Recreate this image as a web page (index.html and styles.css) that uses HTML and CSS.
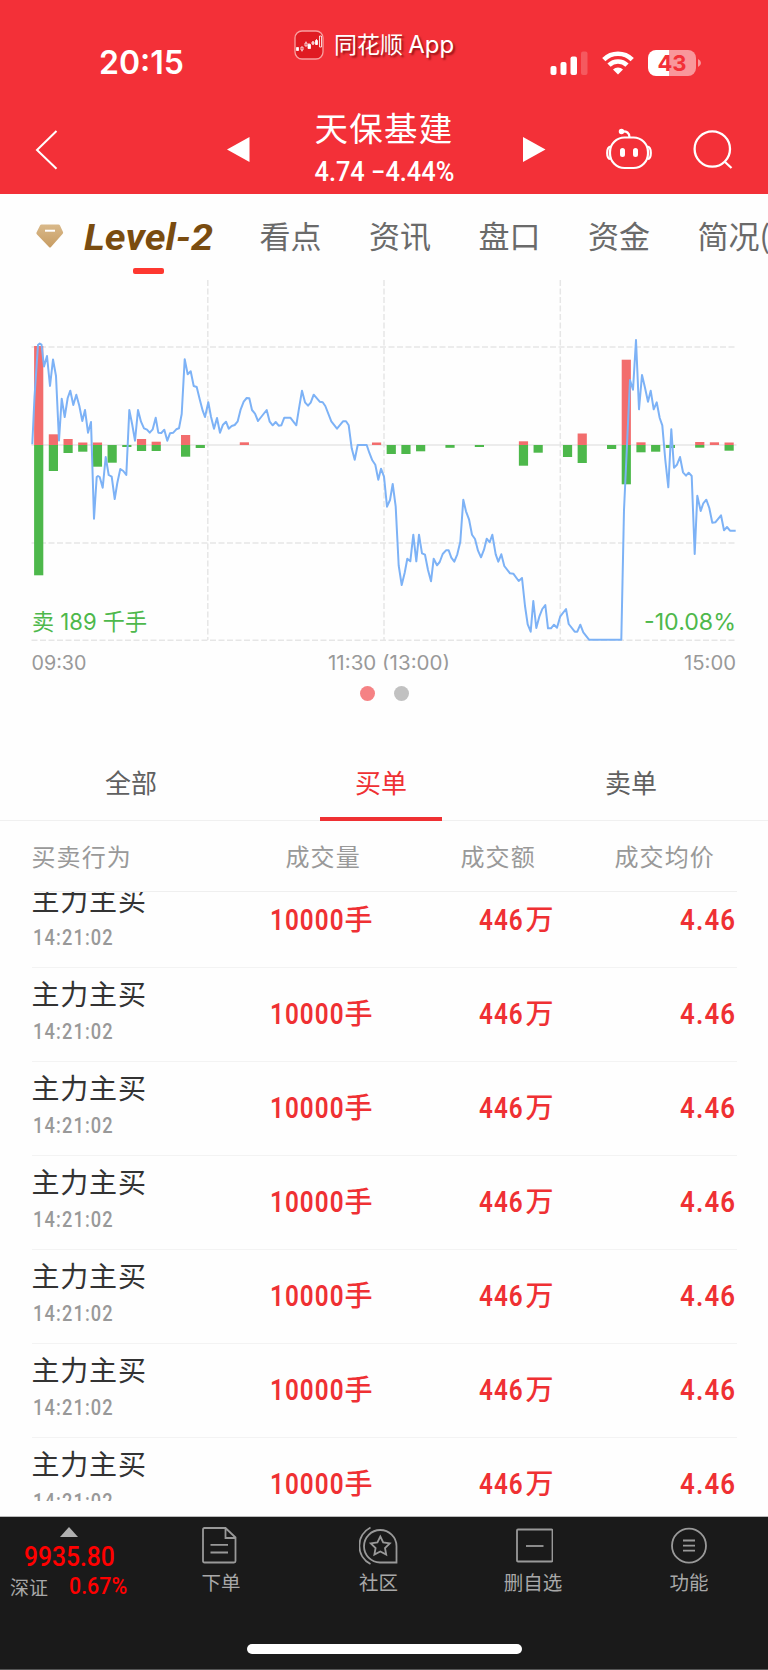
FILE: index.html
```html
<!DOCTYPE html>
<html lang="zh-CN">

<head>
    <meta charset="UTF-8">
    <meta name="viewport" content="width=device-width, initial-scale=1.0">
    <title>天保基建 - Level-2</title>
    <link rel="stylesheet" href="styles.css">
</head>

<body>
    <header class="header">
        <div class="status-bar">
            <span class="clock">20:15</span>
            <svg class="signal" width="38" height="24" viewBox="0 0 38 24" fill="#fff">
                <rect x="0.5" y="15" width="6" height="9" rx="2" />
                <rect x="10.5" y="11" width="6" height="13" rx="2" />
                <rect x="20.5" y="5.500" width="6.500" height="18.500" rx="2" />
                <rect x="31" y="0.500" width="6.500" height="23.500" rx="2" opacity="0.2" />
            </svg>
            <svg class="wifi" width="32" height="24" viewBox="0 0 32 24" fill="none" stroke="#fff" stroke-width="4.600">
                <path d="M1.800 8.600a20.200 20.200 0 0 1 28.400 0" />
                <path d="M7 14.200a12.800 12.800 0 0 1 18 0" />
                <path d="M16 23.500l-5-5a7 7 0 0 1 10 0z" fill="#fff" stroke="none" />
            </svg>
            <div class="battery"><span>43</span></div>
            <svg class="battery-cap" width="3" height="8" viewBox="0 0 3 8"><path d="M0 0q3 1.500 3 4t-3 4z" fill="#f9979b" /></svg>
        </div>
        <div class="brand">
            <svg width="30" height="30" viewBox="0 0 30 30">
                <rect x="1" y="1" width="28" height="28" rx="7" fill="#e01b22" stroke="#f8a0a0" stroke-width="1.300" />
                <g fill="#fff" stroke="#fff" stroke-width="0.800">
                    <path d="M2.500 17.500h2v3h-2zM14 14.500h2.500v4H14zM21.500 10.500h2v4h-2z" />
                    <path d="M7 17h2v3H7zM11 13h2v3h-2zM18 12h2v2h-2zM25.500 6h2v11h-2zM8 20v1.500M12 11.500V13M15 13v1.500M19 11v4M22.500 9v6" fill="none" />
                </g>
            </svg>
            <span>同花顺 <span class="brand-app">App</span></span>
        </div>
        <nav class="nav-bar">
            <svg class="back" width="24" height="40" viewBox="0 0 24 40" fill="none" stroke="#fff" stroke-width="2"><path d="M21.500 1L2 20l19.500 18.700" /></svg>
            <svg class="prev" width="23" height="25" viewBox="0 0 23 25"><path d="M22.500 0v25L0 12.500z" fill="#fff" /></svg>
            <div class="stock">
                <h1>天保基建</h1>
                <p><span class="num">4.74 −4.44%</span></p>
            </div>
            <svg class="next" width="23" height="25" viewBox="0 0 23 25"><path d="M0 0v25l22.500-12.500z" fill="#fff" /></svg>
            <svg class="robot" width="46" height="42" viewBox="0 0 46 42" fill="none" stroke="#fff" stroke-width="2.200">
                <rect x="4" y="9.500" width="38" height="30.500" rx="14.500" />
                <path d="M4.500 18.500Q1.200 19 1.200 25t3.300 6M41.500 18.500q3.300.500 3.300 6.500t-3.300 6" />
                <path d="M15.500 3.500q8-1 8 6" />
                <circle cx="15.500" cy="3.500" r="2" fill="#fff" stroke-width="1.500" />
                <path d="M16.500 22.500v4M29.500 22.500v4" stroke-width="5" stroke-linecap="round" />
            </svg>
            <svg class="search" width="40" height="40" viewBox="0 0 40 40" fill="none" stroke="#fff" stroke-width="2.300">
                <circle cx="19.300" cy="19" r="17.700" />
                <path d="M31.500 31.500l7 6.500" />
            </svg>
        </nav>
    </header>

    <div class="tabs">
        <div class="tab-level2">
            <svg width="184" height="40" viewBox="0 0 184 40" class="level2-svg">
                <defs>
                    <linearGradient id="gem" x1="0" y1="0" x2="0" y2="1">
                        <stop offset="0" stop-color="#d9b98a" />
                        <stop offset="1" stop-color="#c79c62" />
                    </linearGradient>
                </defs>
                <path d="M6.500 10.500h17q1 0 1.500 1l3 6.500q.500 1-.500 2L16 33q-1 1-2 0L2 20.500q-1-1-.500-2L5 11.500q.500-1 1.500-1z" fill="url(#gem)" />
                <path d="M10 16.700h10" stroke="#fff" stroke-width="2" />
                <text x="49" y="35.500" textLength="129" lengthAdjust="spacingAndGlyphs">Level-2</text>
            </svg>
        </div>
        <span>看点</span>
        <span>资讯</span>
        <span>盘口</span>
        <span>资金</span>
        <span>简况(</span>
    </div>

    <section class="chart">
        <svg width="768" height="390" viewBox="0 280 768 390">
            <g class="grid-lines">
                <path d="M31.500 347H736.500M31.500 543H736.500M31.500 640.300H736.500M207.800 280V640M384 280V640M560.300 280V640" stroke-dasharray="6 2.500" />
                <path d="M31.500 445H736.500" />
            </g>
            <g class="buy" id="buyBars"></g>
            <g class="sell" id="sellBars"></g>
            <polyline class="price-line" points="32.300,444.300 34.500,397 38,345 39.700,343.500 41.500,344.500 44,366.500 47,356 50,386 53,359.500 56,376 59,440.500 61.700,398.700 64.700,417 67.700,398 70.300,390.700 73.300,405 76.300,394.700 79.300,405.700 82.300,421 85,410 88,432.700 91,422 94,518.700 96.700,477 98,476 99.700,477 102.700,487.700 105.700,457 108.700,475 111.700,476.700 114.700,499 117.300,483 120.300,469 123.300,471 126.300,475 129.300,410 132.300,425 135,440.700 138,410 141,421.700 144,428.300 147,429.700 149.700,432.700 152.700,429.300 155.700,417.700 158.300,432.700 161.300,433 164.300,429.700 167.300,440.700 170,433.300 173.300,432.700 176.300,429.300 179,428.300 181.700,414 184.700,359.300 187.700,374.300 190.700,371.300 193.700,386 196.700,387 199.700,399.300 202.700,410.700 205,417 208.300,402.300 211,416.700 214,428.700 217,418 220,432.700 223,424.700 226,421.700 228.700,428.700 231.700,426 234.700,425 237.700,421.300 240.700,409.300 243.700,401.700 246.700,398 249.300,398.300 252,410 255,413.700 258,421 266.700,410 269.700,421.700 272.700,425.300 275.700,422 278.700,425.700 281.300,425.300 284.300,417.700 290.300,417.700 296.300,425.300 299,408.300 302,390.700 305,402.300 308,405.700 310.700,402.700 313.700,394.700 319.700,401.700 322.700,402.300 325.300,406 331.300,421.300 337,428.700 343,421.300 346,421.300 348.700,425.300 351.700,448.300 354.700,459.700 357.700,445 366.700,445 369.300,452.700 372.300,460.300 375.300,464.700 378.300,479.700 381,468.700 384,476.700 387,506.700 390,500 392.700,484 395.700,506.700 398.700,565.700 401.700,585 404.700,572.700 407.300,558.700 410.300,561.300 413.300,534.700 416.300,561.300 419,534.700 422,553.300 425,554.700 428,570 431,581.300 433.700,558.700 437,565.300 439.700,562 442.700,554 446,550.300 448.700,550.300 451.300,557.700 454.300,561.700 457.300,554.300 460.300,541.700 463.300,499.700 466,511.300 469,519.300 472,534.700 475,539 478,550.700 481,557.300 484,549.700 486.700,538.700 489.700,542.300 492.300,534.700 495.700,554.300 498.300,561.700 501.300,554.300 504.300,566 510,573.300 513.300,573.700 518.700,581 522,578 525,606 527.700,624.300 530.700,631.700 533.300,601 536.300,628 539.300,616.700 542.300,609 545.300,605 548,628.300 551,628.300 554,624.700 557,627.700 560.300,616.300 566,609 568.700,624 574.700,631.700 577.300,631.700 580.300,624.700 583.300,632.300 589,639.700 621.300,639.700 624,510 627,445 630,380 633,389.700 636,340 639,409.300 642,375 645,387.700 648,401.700 650.700,390.700 653.700,409.300 656.700,402.300 659.700,418 662.300,425.300 665.300,460 668.300,487.300 671.300,429.300 674,467.700 677,464.700 680,457 683,472.300 686,475.700 688.700,472.700 691.700,476 694.700,554 697.300,495.700 700.700,511 703.300,503.300 706.300,499.700 709.300,508 712.300,522.700 715.300,522.300 721,515.300 724,530.300 727,527 730,530.700 735.700,530.700" />
            <g class="chart-value">
                <text x="32" y="629.500" textLength="115" lengthAdjust="spacingAndGlyphs">卖 189 千手</text>
                <text x="736" y="629.500" text-anchor="end" textLength="92" lengthAdjust="spacingAndGlyphs">-10.08%</text>
            </g>
            <g class="chart-time">
                <text x="31.500" y="669.500" textLength="55" lengthAdjust="spacingAndGlyphs">09:30</text>
                <text x="328" y="669.500" textLength="122" lengthAdjust="spacingAndGlyphs">11:30 (13:00)</text>
                <text x="736" y="669.500" text-anchor="end" textLength="52" lengthAdjust="spacingAndGlyphs">15:00</text>
            </g>
        </svg>
        <div class="dots"><i class="dot active"></i><i class="dot"></i></div>
    </section>

    <div class="order-tabs">
        <span>全部</span>
        <span class="active">买单</span>
        <span>卖单</span>
    </div>

    <section class="orders">
        <div class="orders-head">
            <span>买卖行为</span>
            <span>成交量</span>
            <span>成交额</span>
            <span>成交均价</span>
        </div>
        <div class="orders-list">
            <div class="order">
                <div class="action">主力主买<small class="num">14:21:02</small></div>
                <div class="volume"><b class="num">10000</b>手</div>
                <div class="amount"><b class="num">446</b>万</div>
                <div class="price"><b class="num">4.46</b></div>
            </div>
            <div class="order">
                <div class="action">主力主买<small class="num">14:21:02</small></div>
                <div class="volume"><b class="num">10000</b>手</div>
                <div class="amount"><b class="num">446</b>万</div>
                <div class="price"><b class="num">4.46</b></div>
            </div>
            <div class="order">
                <div class="action">主力主买<small class="num">14:21:02</small></div>
                <div class="volume"><b class="num">10000</b>手</div>
                <div class="amount"><b class="num">446</b>万</div>
                <div class="price"><b class="num">4.46</b></div>
            </div>
            <div class="order">
                <div class="action">主力主买<small class="num">14:21:02</small></div>
                <div class="volume"><b class="num">10000</b>手</div>
                <div class="amount"><b class="num">446</b>万</div>
                <div class="price"><b class="num">4.46</b></div>
            </div>
            <div class="order">
                <div class="action">主力主买<small class="num">14:21:02</small></div>
                <div class="volume"><b class="num">10000</b>手</div>
                <div class="amount"><b class="num">446</b>万</div>
                <div class="price"><b class="num">4.46</b></div>
            </div>
            <div class="order">
                <div class="action">主力主买<small class="num">14:21:02</small></div>
                <div class="volume"><b class="num">10000</b>手</div>
                <div class="amount"><b class="num">446</b>万</div>
                <div class="price"><b class="num">4.46</b></div>
            </div>
            <div class="order">
                <div class="action">主力主买<small class="num">14:21:02</small></div>
                <div class="volume"><b class="num">10000</b>手</div>
                <div class="amount"><b class="num">446</b>万</div>
                <div class="price"><b class="num">4.46</b></div>
            </div>
        </div>
    </section>

    <footer class="bottom-bar">
        <div class="bottom-menu">
            <div class="index">
                <svg width="18" height="10" viewBox="0 0 18 10"><path d="M9 0l9 10H0z" fill="#b0b0b0" /></svg>
                <span class="index-value num">9935.80</span>
                <div class="index-row"><span>深证</span><span class="index-rate num">0.67%</span></div>
            </div>
            <div class="menu-item">
                <svg width="40" height="40" viewBox="0 0 40 40">
                    <path d="M3.500 2H24.500l10 9.500V35q0 1.500-1.500 1.500h-29.500Q2 36.500 2 35V3.500Q2 2 3.500 2zM24.500 2v10h10M9.500 18.800h17.500M9.500 26.500h17.500" />
                </svg>
                <span>下单</span>
            </div>
            <div class="menu-item">
                <svg width="40" height="40" viewBox="0 0 40 40">
                    <path d="M37.500 20v16.500H21A16.250 16.250 0 1 1 37.500 20zM11.500 1.500a20.500 20.500 0 0 0 0 36.500" />
                    <path d="M21.300 10.500l2.900 6 6.600.900-4.800 4.600 1.200 6.500-5.900-3.100-5.900 3.100 1.200-6.500-4.800-4.600 6.600-.900z" />
                </svg>
                <span>社区</span>
            </div>
            <div class="menu-item">
                <svg width="40" height="40" viewBox="0 0 40 40">
                    <rect x="4" y="3.500" width="35.500" height="32" rx="1" />
                    <path d="M13 20h17.500" />
                </svg>
                <span>删自选</span>
            </div>
            <div class="menu-item">
                <svg width="40" height="40" viewBox="0 0 40 40">
                    <circle cx="20" cy="19.700" r="17" />
                    <path d="M14 14.500h12M14 19.700h12M14 24.700h12" />
                </svg>
                <span>功能</span>
            </div>
        </div>
        <div class="home-indicator"></div>
    </footer>

    <script>
        // [slot, y of the bar end], measured from the zero line
        const zero = 445;
        const buy = [[0, 346], [1, 434.3], [2, 439], [3, 442.5], [4, 442.5], [7, 439], [8, 441.7], [10, 435],
            [14, 442.3], [23, 442.5], [33, 441.3], [37, 433.5], [40, 359.7], [41, 442.3], [45, 442], [46, 442.3], [47, 442.5]];
        const sell = [[0, 575.3], [1, 471], [2, 453], [3, 451.7], [4, 466.7], [5, 462.7], [6, 447], [7, 451], [8, 451],
            [10, 456.7], [11, 448], [24, 454], [25, 454], [26, 451.3], [28, 447.8], [30, 447], [33, 465.7], [34, 452.7],
            [36, 457], [37, 463], [39, 449], [40, 484.3], [41, 452.3], [42, 451.7], [43, 448], [45, 447.7], [47, 450.7]];

        function drawBars(id, bars) {
            document.getElementById(id).innerHTML = bars.map(([slot, y]) =>
                `<rect x="${34.1 + slot * 14.69}" y="${Math.min(y, zero)}" width="9.2" height="${Math.abs(y - zero)}" />`
            ).join('');
        }

        drawBars('buyBars', buy);
        drawBars('sellBars', sell);
    </script>
</body>

</html>
```

FILE: styles.css
```css
* {
    margin: 0;
    padding: 0;
    box-sizing: border-box;
}

body {
    width: 768px;
    height: 1670px;
    overflow: hidden;
    background: #fefefe;
    font-family: 'Noto Sans CJK SC', sans-serif;
    color: #333;
}

svg {
    display: block;
    flex: none;
}

/* condensed figures */
.num {
    display: inline-block;
    font-family: Roboto, sans-serif;
    font-weight: 500;
    transform: scaleX(0.88);
    transform-origin: left center;
    white-space: nowrap;
}

.header {
    position: relative;
    height: 193.5px;
    background: #f33038;
    color: #fff;
}

.status-bar {
    display: flex;
    align-items: center;
    height: 97px;
    padding: 28px 0 0 99px;
}

.clock {
    width: 451px;
    font: 600 32px/40px Inter, sans-serif;
}

.wifi {
    margin-left: 14px;
}

.battery {
    width: 48px;
    height: 26px;
    margin-left: 14px;
    border-radius: 8px;
    background: linear-gradient(90deg, #fff 43%, #f9979b 43%);
    color: #f33038;
    font: 700 22px/26px Inter, sans-serif;
    text-align: center;
}

.battery-cap {
    margin-left: 2px;
}

.brand {
    position: absolute;
    left: 294px;
    top: 29px;
    display: flex;
    align-items: center;
    gap: 10px;
    font-size: 23px;
    line-height: 30px;
    text-shadow: 2px 2px 2px rgba(90, 0, 0, 0.6);
}

.brand > span {
    margin-top: -1px;
}

.brand-app {
    font-family: Inter, sans-serif;
    font-size: 24px;
}

.nav-bar {
    display: flex;
    align-items: center;
    height: 96px;
    padding-left: 35px;
}

.nav-bar svg {
    margin-top: 10px;
}

.nav-bar .prev {
    margin: 8px 0 0 168px;
}

.stock {
    width: 273px;
    padding-right: 5px;
    text-align: center;
}

.stock h1 {
    height: 43px;
    margin-top: 6px;
    font-size: 33.5px;
    line-height: 41px;
    font-weight: 400;
    letter-spacing: 1.2px;
}

.stock p {
    height: 42px;
    font-size: 27px;
    line-height: 41px;
}

.stock .num {
    transform: scaleX(0.94);
    transform-origin: center;
}

.nav-bar .next {
    margin-top: 8px;
}

.nav-bar .robot {
    margin: 8px 0 0 60px;
}

.nav-bar .search {
    margin-left: 41px;
}

.tabs {
    display: flex;
    height: 86.5px;
    padding: 20px 0 0 35px;
    overflow: hidden;
    gap: 47.5px;
    color: #6a6a6a;
    font-size: 31px;
    line-height: 42px;
    white-space: nowrap;
}

.tab-level2 {
    width: 177px;
}

.tab-level2::after {
    content: '';
    display: block;
    width: 31px;
    height: 6px;
    margin: 14px 0 0 98px;
    border-radius: 2px;
    background: #fe3830;
}

.level2-svg text {
    font: italic 700 37px Roboto, sans-serif;
    fill: #7a4c10;
}

.chart {
    height: 423px;
}

.grid-lines {
    fill: none;
    stroke: #e6e6e6;
    stroke-width: 1.5;
}

.buy {
    fill: #f26d6d;
}

.sell {
    fill: #4db84b;
}

.price-line {
    fill: none;
    stroke: #7db2f6;
    stroke-width: 2;
    stroke-linejoin: round;
}

.chart-value {
    font: 23px Inter, 'Noto Sans CJK SC', sans-serif;
    fill: #4db84b;
}

.chart-time {
    font: 19.5px Inter, sans-serif;
    fill: #999;
}

.dots {
    display: flex;
    justify-content: center;
    gap: 19px;
    margin-top: 15.5px;
}

.dot {
    width: 15px;
    height: 15px;
    border-radius: 50%;
    background: #c1c1c1;
}

.dot.active {
    background: #f58284;
}

.order-tabs {
    display: grid;
    grid-template-columns: repeat(3, 250px);
    justify-items: center;
    height: 118px;
    padding: 45px 0 0 6px;
    border-bottom: 1px solid #f0f0f0;
    color: #606060;
    font-size: 26px;
    line-height: 68px;
}

.order-tabs span {
    width: 122px;
    height: 73px;
    text-align: center;
}

.order-tabs .active {
    border-bottom: 4px solid #ef3033;
    color: #ef3033;
}

.orders {
    width: 705px;
    margin-left: 31.5px;
}

.orders-head {
    display: grid;
    grid-template-columns: 254px 175px 154px 1fr;
    height: 71px;
    border-bottom: 1px solid #efefef;
    color: #999;
    font-size: 24px;
    line-height: 69px;
    letter-spacing: 1.1px;
}

.orders-list {
    height: 609px;
    overflow: hidden;
}

.order {
    display: grid;
    grid-template-columns: 238px 209px 1fr 80px;
    height: 94.1px;
    border-bottom: 1px solid #f3f3f3;
    color: #ef3033;
    font-size: 28px;
    font-weight: 500;
    line-height: 89px;
    white-space: nowrap;
}

.order:first-child {
    margin-top: -18.5px;
}

.action {
    padding-top: 6px;
    color: #333;
    font-size: 28px;
    font-weight: 400;
    line-height: 39px;
    letter-spacing: 0.8px;
}

.action .num {
    display: block;
    margin-left: 1px;
    color: #999;
    font-size: 22.5px;
    line-height: 36px;
    letter-spacing: 1.4px;
    transform: scaleX(0.81);
}

.order b {
    font-size: 30px;
    font-weight: 600;
    letter-spacing: 1.3px;
    transform: scaleX(0.81);
}

.volume .num {
    width: 75px;
}

.amount .num {
    width: 47px;
}

.price {
    text-align: right;
}

.price .num {
    transform: scaleX(0.86);
    transform-origin: right center;
}

.bottom-bar {
    height: 154px;
    margin-top: 15px;
    border-top: 1px solid #bbb;
    border-bottom: 1px solid #555;
    background: #1a1a1a;
}

.bottom-menu {
    display: grid;
    grid-template-columns: 143px repeat(4, 156px);
    height: 128px;
    color: #a8a8a8;
    font-size: 19.5px;
}

.index {
    padding-top: 10px;
}

.index svg {
    margin-left: 60px;
}

.index-value {
    display: block;
    margin-left: 24px;
    color: #f00;
    font-size: 28px;
    line-height: 39px;
}

.index-row {
    display: flex;
    padding-left: 10px;
    gap: 21px;
    font-size: 19px;
    line-height: 22px;
}

.index-rate {
    color: #f00;
    font-size: 23px;
    transform: scaleX(0.93);
}

.menu-item {
    display: flex;
    flex-direction: column;
    align-items: center;
    padding-top: 9px;
}

.menu-item:nth-child(3) {
    padding-left: 3px;
}

.menu-item svg {
    fill: none;
    stroke: #999;
    stroke-width: 1.8;
}

.menu-item span {
    margin-top: 2px;
    line-height: 28px;
}

.home-indicator {
    width: 275px;
    height: 10px;
    margin: -1px auto 0;
    border-radius: 5px;
    background: #fff;
}
```
